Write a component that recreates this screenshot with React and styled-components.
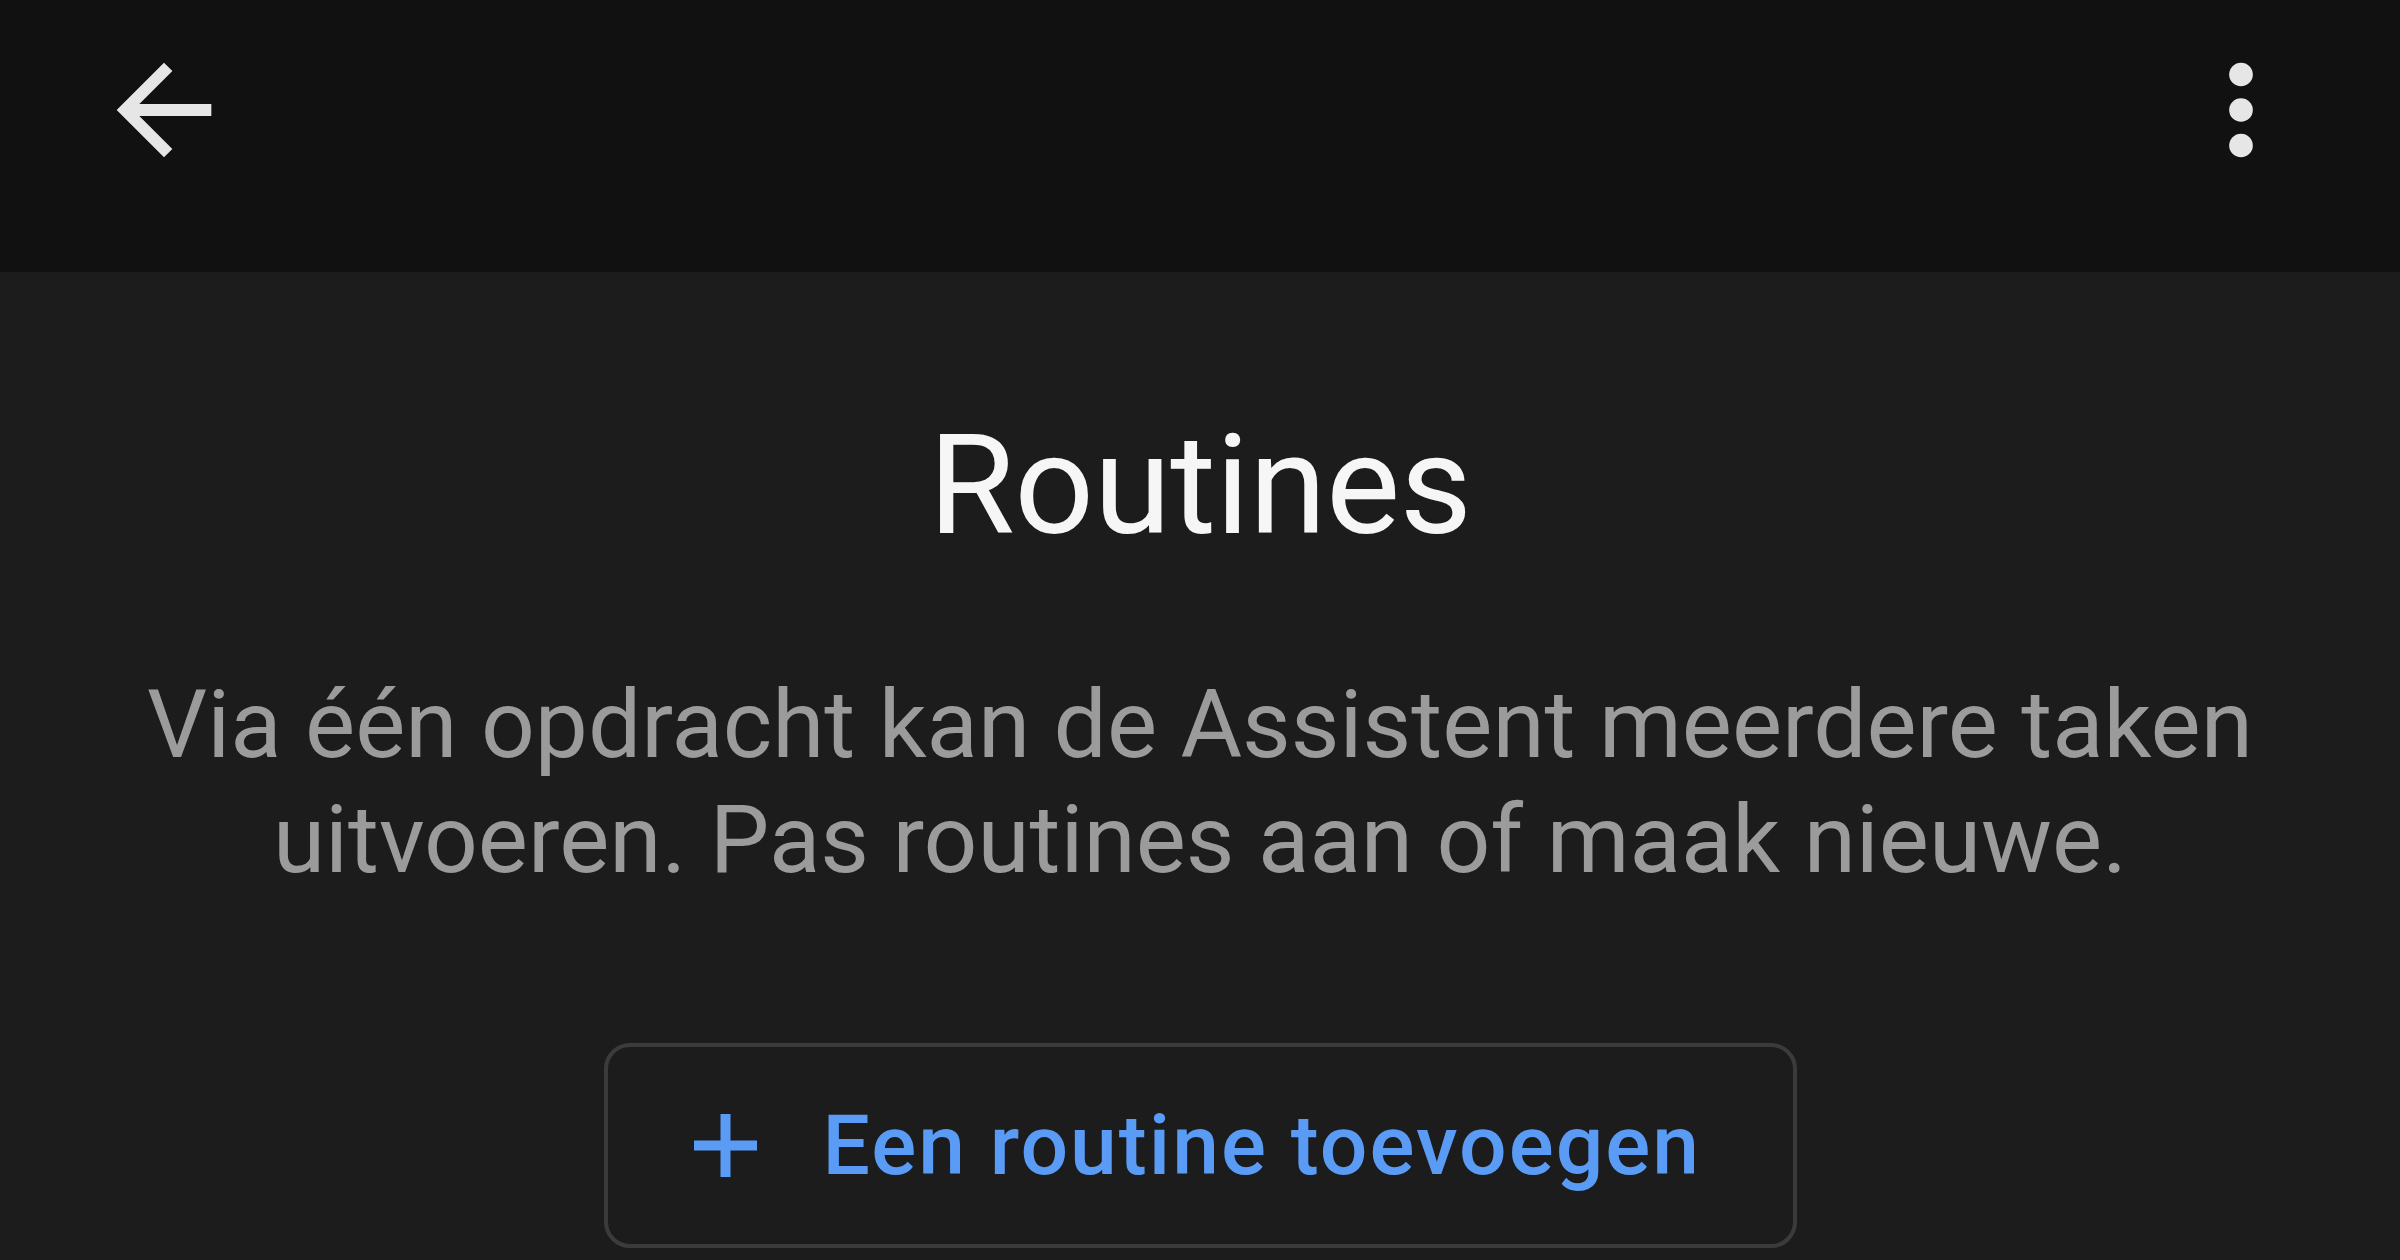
import React from 'react'
import styled, { createGlobalStyle } from 'styled-components'

const GlobalStyle = createGlobalStyle`
  html, body {
    margin: 0;
    padding: 0;
    background-color: #1c1c1c;
  }
  * {
    box-sizing: border-box;
  }
`

const Screen = styled.div`
  display: flex;
  flex-direction: column;
  height: 1260px;
  overflow: hidden;
  background-color: #1c1c1c;
  font-family: Roboto, 'Noto Sans', sans-serif;
`

const TopBar = styled.header`
  display: flex;
  justify-content: space-between;
  align-items: flex-start;
  height: 272px;
  flex-shrink: 0;
  padding: 39px 88px 0 93px;
  background-color: #111111;
`

const IconButton = styled.button`
  display: flex;
  align-items: center;
  justify-content: center;
  width: 142px;
  height: 142px;
  padding: 0;
  border: none;
  background: none;
  color: #e6e6e6;
  cursor: pointer;

  svg {
    width: 142px;
    height: 142px;
    fill: currentColor;
  }
`

const Content = styled.main`
  display: flex;
  flex-direction: column;
  align-items: center;
`

const Title = styled.h1`
  margin: 143px 0 0;
  font-size: 140px;
  line-height: 1;
  font-weight: 400;
  letter-spacing: -0.5px;
  color: #f6f6f6;
`

const Description = styled.p`
  margin: 112px 0 0;
  font-size: 94.5px;
  line-height: 115px;
  font-weight: 400;
  text-align: center;
  color: #9b9b9b;
`

const AddButton = styled.button`
  display: flex;
  align-items: center;
  gap: 66px;
  width: 1193px;
  height: 205px;
  margin-top: 146px;
  padding: 0 0 0 86px;
  border: 4px solid #3b3b3b;
  border-radius: 26px;
  background: transparent;
  color: #5a9bf6;
  font-family: inherit;
  font-size: 84px;
  font-weight: 500;
  letter-spacing: 2px;
  cursor: pointer;

  svg {
    flex-shrink: 0;
    width: 63px;
    height: 63px;
  }
`

function BackArrow() {
  return (
    <svg viewBox="0 0 24 24">
      <path d="M20 11H7.83l5.59-5.59L12 4l-8 8 8 8 1.41-1.41L7.83 13H20v-2z" />
    </svg>
  )
}

function MoreVert() {
  return (
    <svg viewBox="0 0 24 24">
      <circle cx="12" cy="6" r="2" />
      <circle cx="12" cy="12" r="2" />
      <circle cx="12" cy="18" r="2" />
    </svg>
  )
}

function PlusIcon() {
  return (
    <svg viewBox="0 0 63 63">
      <path d="M31.5 0v63M0 31.5h63" stroke="currentColor" strokeWidth="10" fill="none" />
    </svg>
  )
}

export default function App() {
  return (
    <>
      <GlobalStyle />
      <Screen>
        <TopBar>
          <IconButton aria-label="Terug">
            <BackArrow />
          </IconButton>
          <IconButton aria-label="Meer opties">
            <MoreVert />
          </IconButton>
        </TopBar>

        <Content>
          <Title>Routines</Title>
          <Description>
            Via één opdracht kan de Assistent meerdere taken
            <br />
            uitvoeren. Pas routines aan of maak nieuwe.
          </Description>
          <AddButton>
            <PlusIcon />
            Een routine toevoegen
          </AddButton>
        </Content>
      </Screen>
    </>
  )
}
